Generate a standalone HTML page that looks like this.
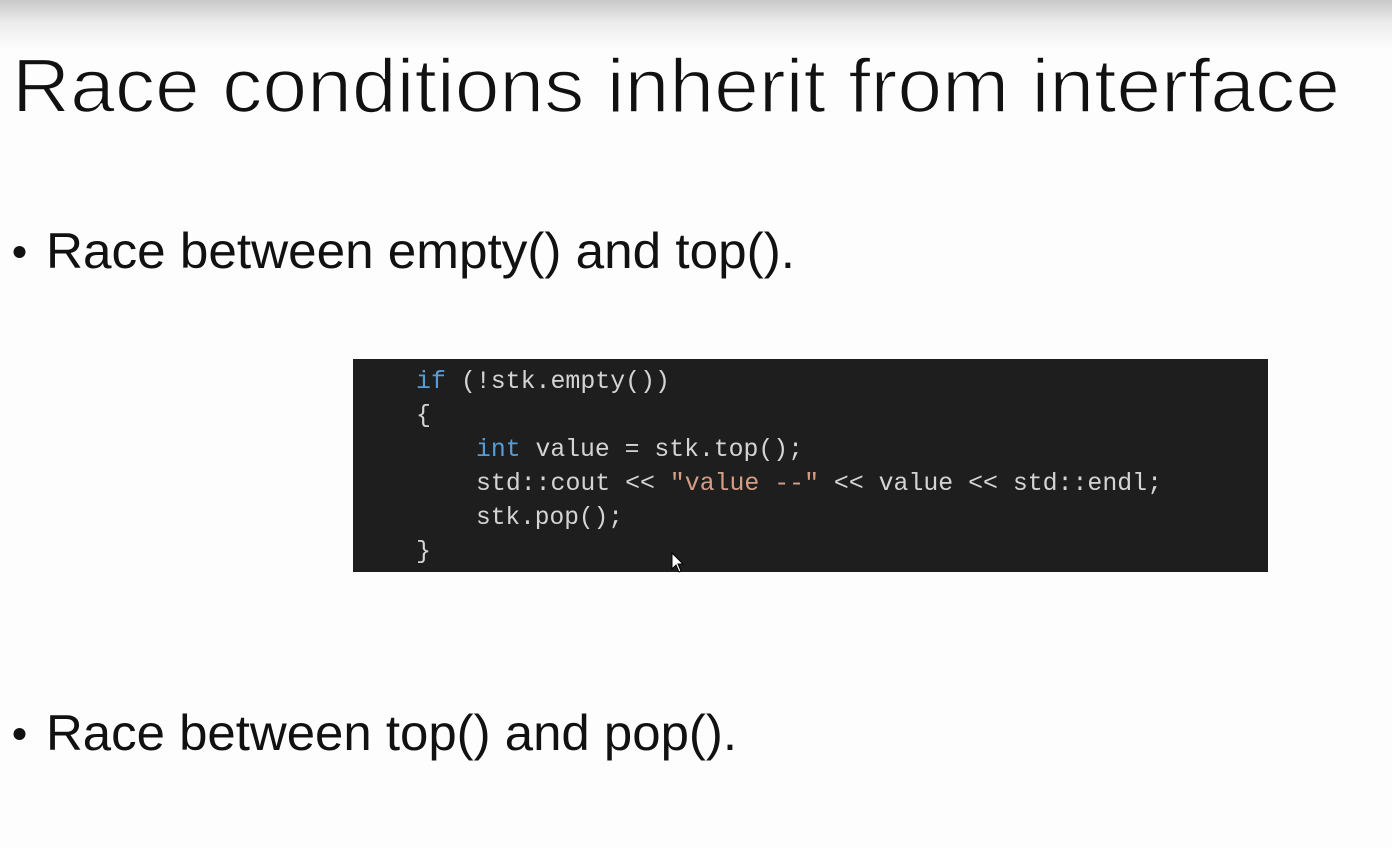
<!DOCTYPE html>
<html><head><meta charset="utf-8"><style>
html,body{margin:0;padding:0;}
body{width:1392px;height:848px;overflow:hidden;background:#fdfdfd;position:relative;font-family:"Liberation Sans",sans-serif;}
.top{position:absolute;left:0;top:0;width:1392px;height:50px;background:linear-gradient(#c8c8c8,#ececec 45%,#fdfdfd);}
.code{position:absolute;left:353px;top:359px;width:915px;height:213px;background:#1e1e1e;}
</style></head><body>
<div class="top"></div>
<svg width="1392" height="848" style="position:absolute;left:0;top:0">
<text x="12" y="112" font-family="Liberation Sans" font-size="76" fill="#111" stroke="#fdfdfd" stroke-width="1.6" paint-order="normal" textLength="1328" lengthAdjust="spacingAndGlyphs">Race conditions inherit from interface</text>
<circle cx="19.5" cy="252" r="6" fill="#111"/>
<text x="46" y="268" font-family="Liberation Sans" font-size="50" fill="#111" textLength="749" lengthAdjust="spacingAndGlyphs">Race between empty() and top().</text>
<circle cx="19.5" cy="734" r="6" fill="#111"/>
<text x="46" y="750" font-family="Liberation Sans" font-size="50" fill="#111" textLength="691" lengthAdjust="spacingAndGlyphs">Race between top() and pop().</text>
</svg>
<div class="code"></div>
<svg width="1392" height="848" style="position:absolute;left:0;top:0" font-family="Liberation Mono" font-size="25" fill="#d4d4d4">
<text x="416" y="388" textLength="254" lengthAdjust="spacingAndGlyphs"><tspan fill="#569cd6">if</tspan> (!stk.empty())</text>
<text x="416" y="422">{</text>
<text x="476" y="456" textLength="327" lengthAdjust="spacingAndGlyphs"><tspan fill="#569cd6">int</tspan> value = stk.top();</text>
<text x="476" y="490" textLength="686" lengthAdjust="spacingAndGlyphs">std::cout &lt;&lt; <tspan fill="#d69d85">"value --"</tspan> &lt;&lt; value &lt;&lt; std::endl;</text>
<text x="476" y="524" textLength="147" lengthAdjust="spacingAndGlyphs">stk.pop();</text>
<text x="416" y="558">}</text>
<path d="M672 553 L672 569 L676 565 L679 572 L681 571 L678 564 L683 564 Z" fill="#fff" stroke="#000" stroke-width="1"/>
</svg>
</body></html>
